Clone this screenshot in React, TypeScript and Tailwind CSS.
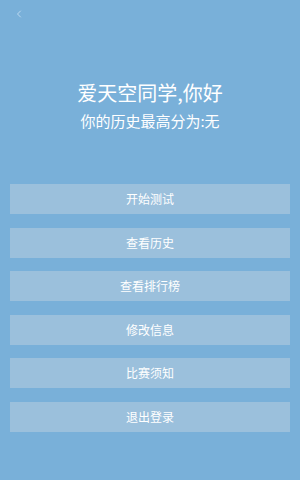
import { ChevronLeft } from 'lucide-react';

const menuItems = ['开始测试', '查看历史', '查看排行榜', '修改信息', '比赛须知', '退出登录'];

export default function App() {
  return (
    <div
      className="w-[300px] h-[480px] bg-[#79b0d9] flex flex-col text-white"
      style={{ fontFamily: '"Noto Sans CJK SC", "Noto Sans", sans-serif' }}
    >
      <div className="h-[28px] pl-[13px] pt-[8px]">
        <ChevronLeft className="w-[12px] h-[12px] text-[#bcd9f0]" strokeWidth={2} />
      </div>
      <div className="mt-[51px] flex flex-col items-center">
        <h1 className="text-[20px] leading-[28px] font-normal">爱天空同学,你好</h1>
        <p className="mt-[3px] text-[15px] leading-[22px]">你的历史最高分为:无</p>
      </div>
      <div className="mt-[52px] px-[10px] flex flex-col gap-[13.5px]">
        {menuItems.map(item => (
          <button
            key={item}
            className="h-[30px] w-full bg-[#9bc0dc] text-[12px] text-white flex items-center justify-center"
          >
            {item}
          </button>
        ))}
      </div>
    </div>
  );
}
